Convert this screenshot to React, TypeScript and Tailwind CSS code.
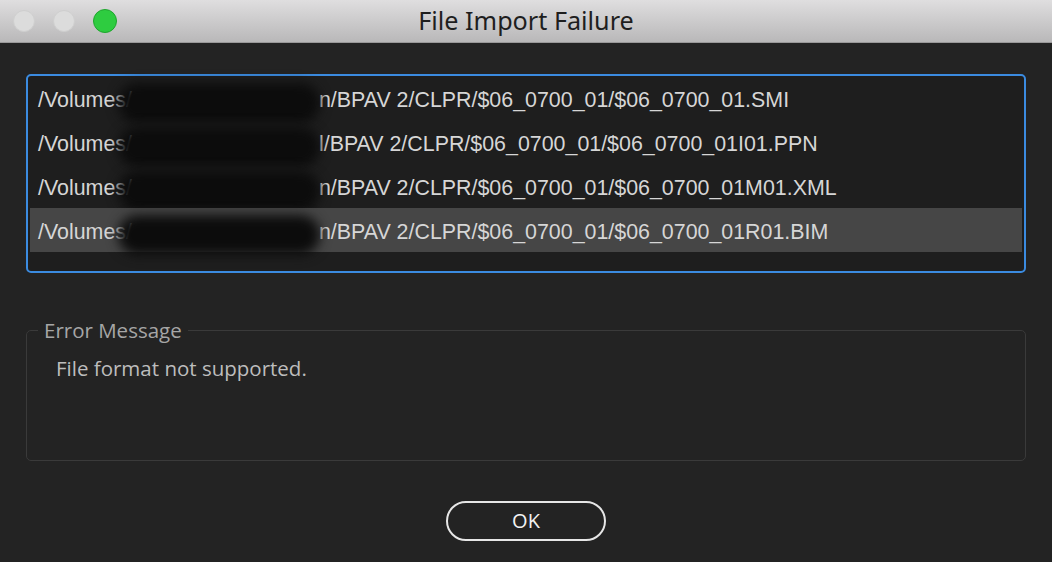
import React from "react";

const rows = [
  { tail: "n/BPAV 2/CLPR/$06_0700_01/$06_0700_01.SMI", sel: false },
  { tail: "l/BPAV 2/CLPR/$06_0700_01/$06_0700_01I01.PPN", sel: false },
  { tail: "n/BPAV 2/CLPR/$06_0700_01/$06_0700_01M01.XML", sel: false },
  { tail: "n/BPAV 2/CLPR/$06_0700_01/$06_0700_01R01.BIM", sel: true },
];

export default function App() {
  return (
    <div
      className="w-[1052px] h-[562px] bg-[#232323] flex flex-col overflow-hidden"
      style={{ fontFamily: "'Open Sans', 'Noto Sans', sans-serif" }}
    >
      {/* Title bar */}
      <div className="relative h-[43px] shrink-0 bg-gradient-to-b from-[#dfdedf] to-[#b9b8b9] border-b border-[#9a999a] flex items-center">
        <div className="flex items-center gap-[18px] pl-[13px]">
          <div className="w-[22px] h-[22px] rounded-full bg-[#dcdcdc] border border-[#cfcfcf]" />
          <div className="w-[22px] h-[22px] rounded-full bg-[#dcdcdc] border border-[#cfcfcf]" />
          <div className="w-[24px] h-[24px] rounded-full bg-[#2ecc40] border border-[#1fa52e]" />
        </div>
        <div
          className="absolute inset-0 flex items-center justify-center text-[25.2px] text-[#1e1e1e]"
          style={{ fontFamily: "'Noto Sans', 'Open Sans', sans-serif" }}
        >
          File Import Failure
        </div>
      </div>

      <div className="flex flex-col px-[26px] pt-[31px]">
        {/* List */}
        <div className="h-[199px] rounded-[5px] border-2 border-[#3b8be0] bg-[#1e1e1e] px-[2px]">
          {rows.map((r, i) => (
            <div
              key={i}
              className={`relative h-[44px] flex items-center pl-[8px] pt-[4px] text-[21.4px] text-[#d6d6d6] whitespace-nowrap ${r.sel ? "bg-[#464646]" : ""}`}
              style={{ fontFamily: "'Liberation Sans', Arial, sans-serif" }}
            >
              <span>/Volumes/</span>
              <span className="inline-block w-[187px]" />
              <span>{r.tail}</span>
              <div className="absolute left-[88px] top-[7px] w-[202px] h-[40px] rounded-full bg-[#0c0c0c] blur-[6px]" />
            </div>
          ))}
        </div>

        {/* Error message group */}
        <fieldset className="mt-[46px] h-[142px] rounded-[5px] border border-[#3a3a3a] px-[29px]">
          <legend className="ml-[-18px] px-[6px] text-[20.5px] leading-[22px] text-[#a6a6a6]">
            Error Message
          </legend>
          <div className="mt-[12px] text-[20.5px] text-[#bdbdbd]">File format not supported.</div>
        </fieldset>

        {/* OK */}
        <div className="flex justify-center mt-[40px]">
          <button className="w-[160px] h-[40px] rounded-full border-2 border-[#e6e6e6] text-[20px] text-[#f2f2f2] flex items-center justify-center">
            OK
          </button>
        </div>
      </div>
    </div>
  );
}
